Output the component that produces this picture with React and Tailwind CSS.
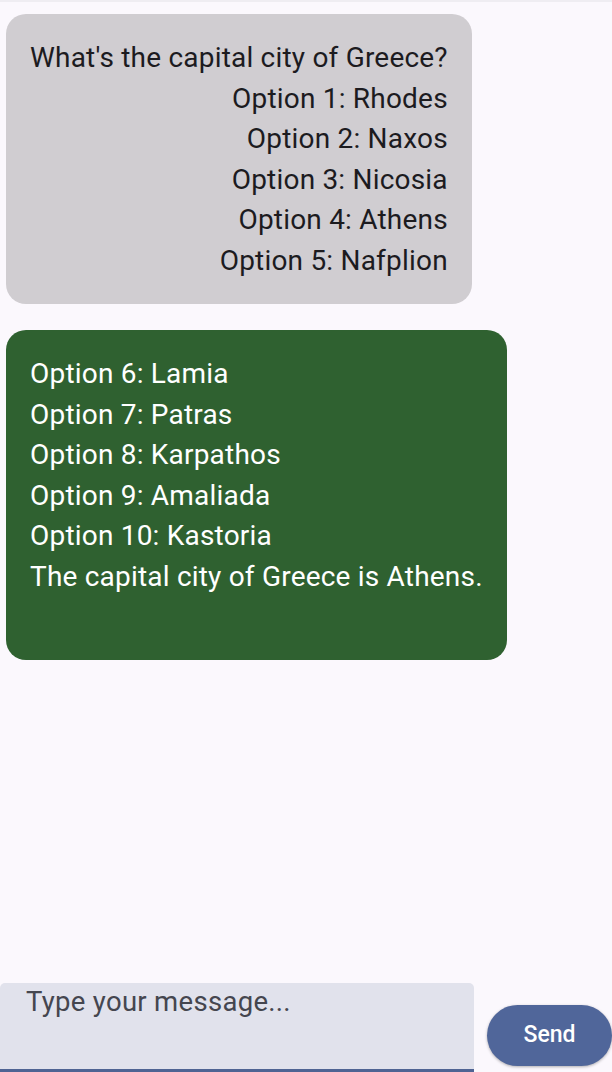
export default function App() {
  const question = [
    "What's the capital city of Greece?",
    'Option 1: Rhodes',
    'Option 2: Naxos',
    'Option 3: Nicosia',
    'Option 4: Athens',
    'Option 5: Nafplion',
  ];
  const answer = [
    'Option 6: Lamia',
    'Option 7: Patras',
    'Option 8: Karpathos',
    'Option 9: Amaliada',
    'Option 10: Kastoria',
    'The capital city of Greece is Athens.',
  ];

  return (
    <div
      className="h-[1072px] w-[612px] flex flex-col bg-[#fbf8fd] border-t-2 border-[#efedf2] overflow-hidden"
      style={{ fontFamily: 'Roboto, "Noto Sans", sans-serif' }}
    >
      {/* Messages */}
      <div className="flex-1 flex flex-col items-start gap-[26px] pt-[12px] pl-[6px]">
        <div className="bg-[#d0cdd1] rounded-[20px] px-6 pt-6 pb-[23px] text-right text-[#1c1b1f] text-[28px] leading-[40.5px] tracking-[0.2px]">
          {question.map((line) => (
            <div key={line}>{line}</div>
          ))}
        </div>

        <div className="bg-[#2f6130] rounded-[20px] px-6 pt-6 pb-[23px] text-white text-[28px] leading-[40.5px] tracking-[0.2px]">
          {answer.map((line) => (
            <div key={line}>{line}</div>
          ))}
          <div className="h-[40px]" />
        </div>
      </div>

      {/* Input row */}
      <div className="flex items-end gap-[13px]">
        <div className="w-[474px] h-[89px] bg-[#e1e2ec] rounded-t-[5px] border-b-[3px] border-[#4f6393] pl-[26px] pt-[2px]">
          <span className="block text-[27.5px] leading-[32px] mt-[1px] tracking-[0.3px] text-[#45464f]">Type your message...</span>
        </div>
        <button className="mb-[6px] w-[125px] h-[61px] rounded-full bg-[#50669a] text-white text-[23px] font-medium shadow-[0_1px_3px_rgba(0,0,0,0.3)]">
          Send
        </button>
      </div>
    </div>
  );
}
